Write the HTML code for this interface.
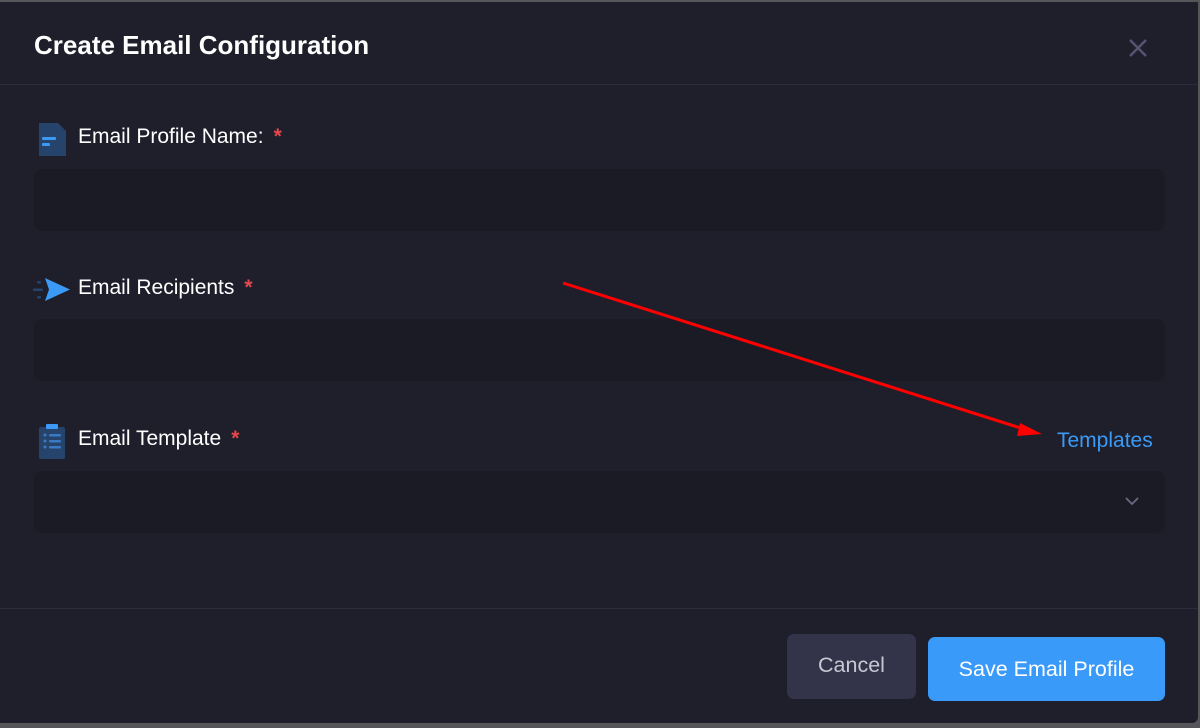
<!DOCTYPE html>
<html><head><style>
body{margin:0;width:1200px;height:728px;background:#55555a;overflow:hidden;font-family:"Liberation Sans",sans-serif;}
.m{position:absolute;left:0;top:2px;width:1198px;height:721px;background:#1f1f2c;border-radius:0 0 6px 0;}
.hd{position:absolute;left:0;top:0;width:1198px;height:82px;border-bottom:1px solid #2c2c3c;}
.hd h1{position:absolute;left:34px;top:28px;margin:0;font-size:26px;font-weight:bold;color:#fff;}
.lbl{position:absolute;left:78px;font-size:21px;color:#fff;}
.lbl span{color:#e5484d;margin-left:10px;font-weight:bold;}
.in{position:absolute;left:34px;width:1131px;height:62px;background:#1b1b26;border-radius:8px;}
.ft{position:absolute;left:0;top:606px;width:1198px;border-top:1px solid #2c2c3c;}
.b{position:absolute;border-radius:7px;font-size:21.5px;text-align:center;}
</style></head><body>
<div class="m">
<div class="hd"><h1>Create Email Configuration</h1>
<svg style="position:absolute;left:1128px;top:36px" width="20" height="20"><path d="M2 2L18 18M18 2L2 18" stroke="#555372" stroke-width="2.5"/></svg></div>
<svg style="position:absolute;left:38px;top:120px" width="30" height="36"><path d="M1 1h19l8 8v25H1z" fill="#26436c"/><rect x="4" y="15" width="14" height="3" rx="1" fill="#3a9af5"/><rect x="4" y="21" width="8" height="3" rx="1" fill="#3a9af5"/></svg>
<div class="lbl" style="top:123px">Email Profile Name:<span>*</span></div>
<div class="in" style="top:167px"></div>
<svg style="position:absolute;left:32px;top:275px" width="42" height="28"><path d="M13 1L38 12.5L13 24L17 12.5Z" fill="#3a9af5"/><rect x="1" y="11.5" width="10" height="2.5" rx="1" fill="#26436c"/><rect x="5" y="4" width="4" height="2.5" rx="1" fill="#26436c"/><rect x="5" y="19" width="4" height="2.5" rx="1" fill="#26436c"/></svg>
<div class="lbl" style="top:274px">Email Recipients<span>*</span></div>
<div class="in" style="top:317px"></div>
<svg style="position:absolute;left:38px;top:420px" width="30" height="38"><rect x="1" y="5" width="26" height="32" rx="2" fill="#26436c"/><rect x="8" y="2" width="12" height="5" rx="1" fill="#3a9af5"/><g fill="#3a7ac5"><circle cx="7" cy="13" r="1.5"/><circle cx="7" cy="19" r="1.5"/><circle cx="7" cy="25" r="1.5"/><rect x="11" y="12" width="12" height="2.5" rx="1"/><rect x="11" y="18" width="12" height="2.5" rx="1"/><rect x="11" y="24" width="12" height="2.5" rx="1"/></g></svg>
<div class="lbl" style="top:425px">Email Template<span>*</span></div>
<div style="position:absolute;left:1057px;top:427px;font-size:21px;color:#3a9af5">Templates</div>
<div class="in" style="top:469px"></div>
<svg style="position:absolute;left:1124px;top:494px" width="16" height="10"><path d="M2 2l6 6 6-6" stroke="#6a6a80" stroke-width="1.8" fill="none"/></svg>
<svg style="position:absolute;left:0;top:0" width="1198" height="721"><line x1="563" y1="281" x2="1030" y2="429" stroke="#f00" stroke-width="3"/><path d="M1042 432L1020 421L1017 434Z" fill="#f00"/></svg>
<div class="ft"></div>
<div class="b" style="left:787px;top:632px;width:129px;height:65px;line-height:63px;background:#33334a;color:#c8c8d4">Cancel</div>
<div class="b" style="left:928px;top:635px;width:237px;height:64px;line-height:64px;background:#3a9afa;color:#fff">Save Email Profile</div>
</div>
</body></html>
